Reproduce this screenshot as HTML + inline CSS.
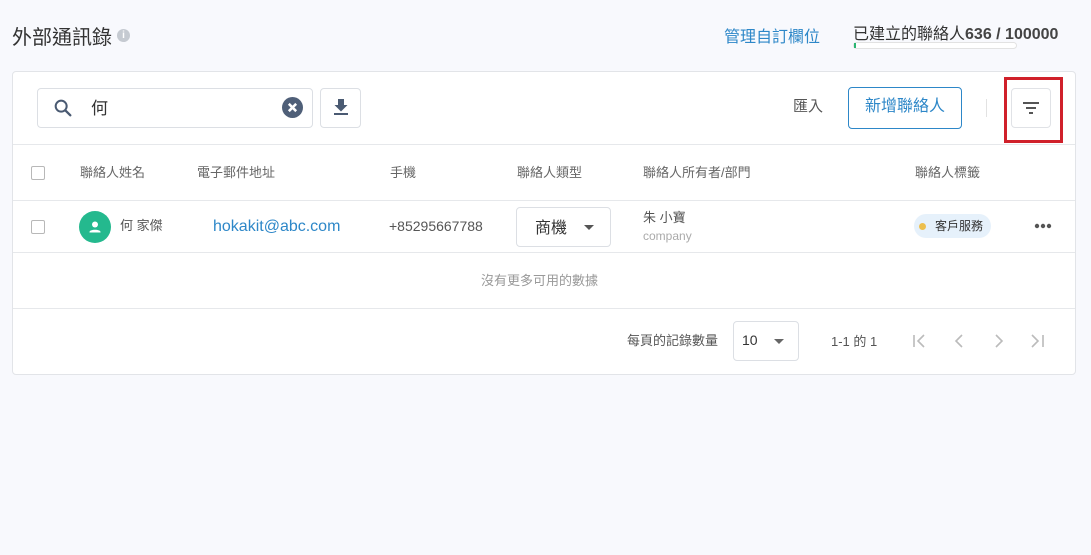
<!DOCTYPE html>
<html><head><meta charset="utf-8"><style>
*{margin:0;padding:0;box-sizing:border-box}
body{width:1091px;height:555px;background:#f8f9fd;font-family:"Liberation Sans","Noto Sans CJK TC",sans-serif;position:relative;overflow:hidden;color:#333}
.a{position:absolute;white-space:nowrap}
.card{position:absolute;left:12px;top:71px;width:1064px;height:304px;background:#fff;border:1px solid #e2e4e8;border-radius:4px}
.hl{position:absolute;left:13px;width:1062px;height:1px;background:#e6e8eb}
.cb{position:absolute;width:14px;height:14px;border:1.5px solid #b8b8b8;border-radius:2px;background:#fff}
.th{font-size:13px;color:#666}
</style></head><body>
<div class="a" style="left:12px;top:21px;font-size:20px;color:#333">外部通訊錄</div>
<div class="a" style="left:117px;top:29px;width:13px;height:13px;border-radius:50%;background:#c5cad1;color:#fff;font-size:10px;text-align:center;line-height:13px;font-weight:bold">i</div>
<div class="a" style="left:724px;top:23px;font-size:16px;color:#2d87c8">管理自訂欄位</div>
<div class="a" style="left:853px;top:20px;font-size:16px;color:#333">已建立的聯絡人<b style="color:#444">636 / 100000</b></div>
<div class="a" style="left:853px;top:42px;width:164px;height:7px;border:1px solid #e2e2e2;border-radius:4px;background:#fff"><div style="width:2px;height:5px;background:#2bb673"></div></div>

<div class="card"></div>
<div class="a" style="left:37px;top:88px;width:276px;height:40px;border:1px solid #dcdfe4;border-radius:4px;background:#fff"></div>
<svg class="a" style="left:52px;top:97px" width="22" height="22" viewBox="0 0 24 24"><circle cx="10" cy="10" r="6" fill="none" stroke="#4a5a72" stroke-width="2.2"/><path d="M14.5 14.5L20 20" stroke="#4a5a72" stroke-width="2.5" stroke-linecap="round"/></svg>
<div class="a" style="left:91px;top:94px;font-size:17px;color:#333">何</div>
<svg class="a" style="left:282px;top:97px" width="21" height="21" viewBox="0 0 20 20"><circle cx="10" cy="10" r="10" fill="#4f5f78"/><path d="M6.5 6.5L13.5 13.5M13.5 6.5L6.5 13.5" stroke="#fff" stroke-width="2.4"/></svg>
<div class="a" style="left:320px;top:88px;width:41px;height:40px;border:1px solid #dcdfe4;border-radius:4px;background:#fff"></div>
<svg class="a" style="left:331px;top:97px" width="20" height="20" viewBox="0 0 20 20"><path d="M7 2h6v6h3.5L10 14.5 3.5 8H7z" fill="#4a5a72"/><rect x="3" y="16" width="14" height="2" fill="#4a5a72"/></svg>
<div class="a" style="left:793px;top:95px;font-size:15px;color:#555">匯入</div>
<div class="a" style="left:848px;top:87px;width:114px;height:42px;border:1.5px solid #2d87c8;border-radius:4px;color:#2d87c8;font-size:16px;text-align:center;line-height:37px">新增聯絡人</div>
<div class="a" style="left:986px;top:99px;width:1px;height:18px;background:#e2e2e2"></div>
<div class="a" style="left:1011px;top:88px;width:40px;height:40px;border:1px solid #e0e2e6;border-radius:4px;background:#fff"></div>
<svg class="a" style="left:1021px;top:98px" width="20" height="20" viewBox="0 0 20 20"><path d="M2 5h16M5 10h10M8 15h4" stroke="#555" stroke-width="2"/></svg>
<div class="a" style="left:1004px;top:77px;width:59px;height:66px;border:3px solid #d0202a"></div>

<div class="hl" style="top:144px"></div>
<div class="cb" style="left:31px;top:166px"></div>
<div class="a th" style="left:80px;top:162px">聯絡人姓名</div>
<div class="a th" style="left:197px;top:162px">電子郵件地址</div>
<div class="a th" style="left:390px;top:162px">手機</div>
<div class="a th" style="left:517px;top:162px">聯絡人類型</div>
<div class="a th" style="left:643px;top:162px">聯絡人所有者/部門</div>
<div class="a th" style="left:915px;top:162px">聯絡人標籤</div>
<div class="hl" style="top:200px"></div>

<div class="cb" style="left:31px;top:220px"></div>
<div class="a" style="left:79px;top:211px;width:32px;height:32px;border-radius:50%;background:#24b98e"></div>
<svg class="a" style="left:87px;top:219px" width="16" height="16" viewBox="0 0 16 16"><circle cx="8" cy="5.5" r="3" fill="#fff"/><path d="M2.5 13c0-3 11-3 11 0v.5h-11z" fill="#fff"/></svg>
<div class="a" style="left:120px;top:215px;font-size:13px;color:#555">何 家傑</div>
<div class="a" style="left:213px;top:218px;font-size:16px;color:#2d87c8">hokakit@abc.com</div>
<div class="a" style="left:389px;top:218px;font-size:14px;color:#555">+85295667788</div>
<div class="a" style="left:516px;top:207px;width:95px;height:40px;border:1px solid #dcdfe4;border-radius:4px;background:#fff"></div>
<div class="a" style="left:535px;top:214px;font-size:16px;color:#333">商機</div>
<div class="a" style="left:584px;top:225px;border-left:5px solid transparent;border-right:5px solid transparent;border-top:5px solid #555"></div>
<div class="a" style="left:643px;top:207px;font-size:13px;color:#555">朱 小寶</div>
<div class="a" style="left:643px;top:229px;font-size:12px;color:#aaa">company</div>
<div class="a" style="left:914px;top:214px;width:77px;height:24px;border-radius:12px;background:#e6f1fb"></div>
<div class="a" style="left:919px;top:223px;width:7px;height:7px;border-radius:50%;background:#ecbf4e"></div>
<div class="a" style="left:935px;top:217px;font-size:12px;color:#333">客戶服務</div>
<svg class="a" style="left:1034px;top:223px" width="18" height="6" viewBox="0 0 18 6"><circle cx="3" cy="3" r="2.2" fill="#555"/><circle cx="9" cy="3" r="2.2" fill="#555"/><circle cx="15" cy="3" r="2.2" fill="#555"/></svg>
<div class="hl" style="top:252px"></div>

<div class="a" style="left:481px;top:270px;font-size:13px;color:#999">沒有更多可用的數據</div>
<div class="hl" style="top:308px"></div>

<div class="a" style="left:627px;top:330px;font-size:13px;color:#555">每頁的記錄數量</div>
<div class="a" style="left:733px;top:321px;width:66px;height:40px;border:1px solid #dcdfe4;border-radius:4px;background:#fff"></div>
<div class="a" style="left:742px;top:332px;font-size:14px;color:#333">10</div>
<div class="a" style="left:774px;top:339px;border-left:5px solid transparent;border-right:5px solid transparent;border-top:5px solid #666"></div>
<div class="a" style="left:831px;top:331px;font-size:13px;color:#555">1-1 的 1</div>
<svg class="a" style="left:910px;top:332px" width="140" height="18" viewBox="0 0 140 18"><g fill="none" stroke="#bbb" stroke-width="1.6"><path d="M4 3v12M14 3l-6 6 6 6"/><path d="M52 3l-6 6 6 6"/><path d="M86 3l6 6-6 6"/><path d="M122 3l6 6-6 6M133 3v12"/></g></svg>
</body></html>
